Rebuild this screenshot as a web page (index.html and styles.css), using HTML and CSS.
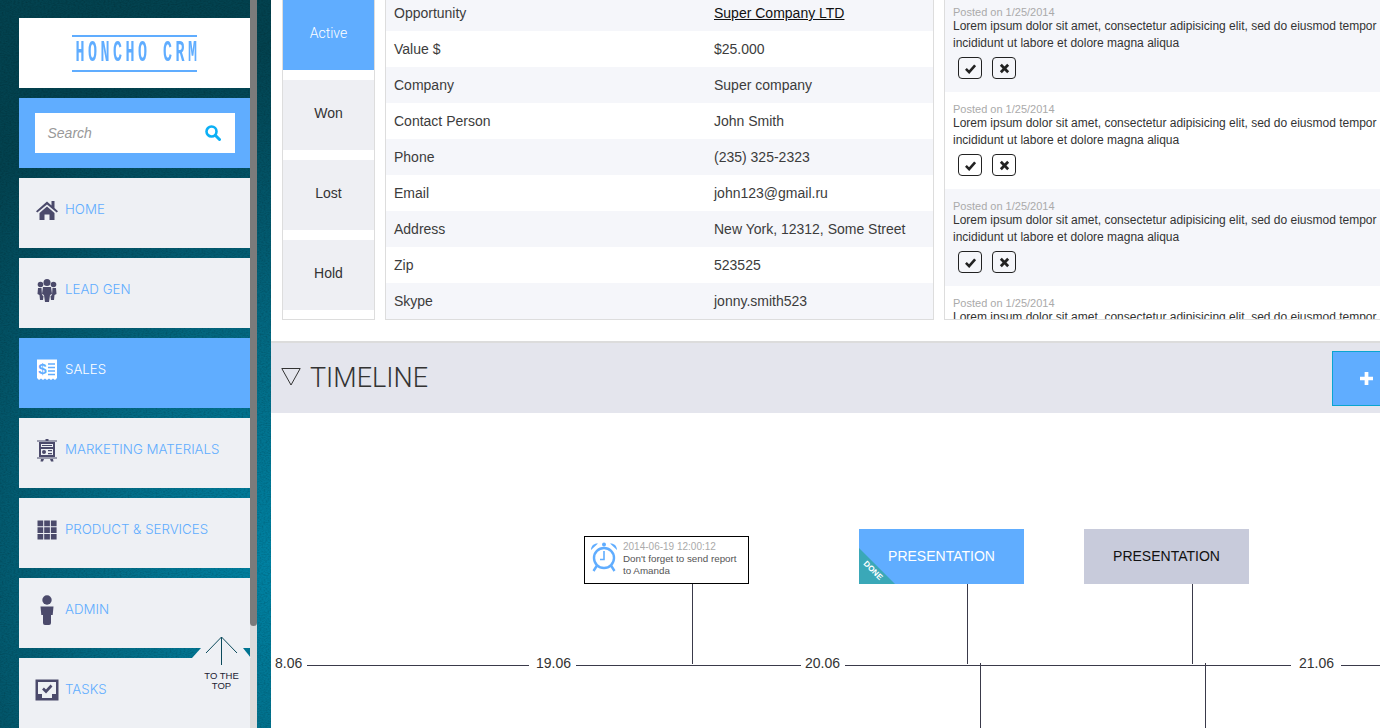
FILE: index.html
```html
<!DOCTYPE html>
<html lang="en">
<head>
<meta charset="utf-8">
<title>Honcho CRM</title>
<link rel="stylesheet" href="styles.css">
</head>
<body>
<div class="app">
  <aside class="side">
    <svg class="grain" width="271" height="728"><filter id="grainf"><feTurbulence type="fractalNoise" baseFrequency="0.5 0.9" numOctaves="2" seed="4"/><feColorMatrix values="0 0 0 0 0  0 0 0 0 0  0 0 0 0 0  0 0 0 1.400 -0.550"/></filter><rect width="271" height="728" filter="url(#grainf)"/></svg>
    <nav class="nav">
      <div class="logo"><div class="logo-frame"><span class="logo-text">HONCHO CRM</span></div></div>
      <div class="search">
        <div class="search-box">
          <span class="search-ph">Search</span>
          <svg class="search-ico" viewBox="0 0 16 16"><circle cx="6.5" cy="6.5" r="5" fill="none" stroke="#0cb0f5" stroke-width="2.6"/><path d="M10.3 10.3 14.5 14.5" stroke="#0cb0f5" stroke-width="3" stroke-linecap="round"/></svg>
        </div>
      </div>
      <a class="item"><svg class="ico" viewBox="0 0 24 24"><path fill="#4b4a6b" d="M1 13.2 12 3.5l4.5 3.9V3h3v7l3.500 3.200-1.300 1.300L12 6.500 2.300 14.500zM4.500 15 12 8.500 19.500 15v7H14.500v-5.500h-5V22H4.500z"/></svg><span>HOME</span></a>
      <a class="item"><svg class="ico" viewBox="0 0 24 24"><g fill="#4b4a6b"><circle cx="12" cy="4.500" r="3.500"/><circle cx="5.500" cy="6.500" r="2.800"/><circle cx="18.500" cy="6.500" r="2.800"/><path d="M8 9h8l1 7-2 1-1 7h-4l-1-7-2-1z"/><path d="M3 10h3.500l.5 7 1.500 1-.5 4H5l-.5-5L2.500 16zM21 10h-3.500l-.5 7-1.500 1 .5 4H19l.5-5 2-1z"/></g></svg><span>LEAD GEN</span></a>
      <a class="item active"><svg class="ico" viewBox="0 0 24 24"><path fill="#fff" d="M2 1.500h20v18.500l-2 2-2-1.500-2 1.500-2-1.500-2 1.500-2-1.500-2 1.500-2-1.500-2 1.500-2-2z"/><text class="ico-dollar" x="3.300" y="16">$</text><path stroke="#60adff" stroke-width="1.400" d="M13 6h7M13 9.500h7M13 13h7M13 16.500h7"/></svg><span>SALES</span></a>
      <a class="item"><svg class="ico" viewBox="0 0 24 24"><g fill="#4b4a6b"><path d="M2 2.500h8.500V1h3v1.500H22v1H2z"/><path d="M4 4h16v15H4zM6 6v3h12V6zM6 11v6h12v-6z"/><path d="M2 19.500h20v1H2zM6 21h3l-1 2.500H5.500zM15 21h3l.5 2.500H16z"/><circle cx="9" cy="14" r="2"/><path d="M13 12h4v1.300h-4zM13 15h4v1.300h-4zM7 7h10v1H7z"/></g></svg><span>MARKETING MATERIALS</span></a>
      <a class="item"><svg class="ico" viewBox="0 0 24 24"><path fill="#4b4a6b" d="M2.500 2.500h5.700v5.700H2.500zM9.200 2.500h5.700v5.700H9.200zM15.900 2.500h5.700v5.700h-5.700zM2.500 9.200h5.700v5.700H2.500zM9.200 9.200h5.700v5.700H9.200zM15.900 9.200h5.700v5.700h-5.700zM2.500 15.900h5.700v5.700H2.500zM9.200 15.900h5.700v5.700H9.200zM15.900 15.900h5.700v5.700h-5.700z"/></svg><span>PRODUCT &amp; SERVICES</span></a>
      <a class="item"><svg class="ico ico-tall" viewBox="0 0 24 30"><g fill="#4b4a6b"><circle cx="12" cy="5" r="4.700"/><path d="M5.500 11.500h13l-.8 8.500h-1.700v8a2 2 0 0 1-2 2h-4a2 2 0 0 1-2-2v-8H6.300z"/></g></svg><span>ADMIN</span></a>
      <a class="item"><svg class="ico" viewBox="0 0 24 24"><path fill="#4b4a6b" fill-rule="evenodd" d="M.5 1.500h23v21H.5zM3 4v12h4v4h10v-4h4V4z"/><path fill="none" stroke="#4b4a6b" stroke-width="2.600" d="M8 10.500l3 3 5.500-6"/></svg><span>TASKS</span></a>
    </nav>
    <div class="scrollbar"><div class="thumb"></div></div>
    <div class="top-link">
      <svg class="top-svg" viewBox="0 0 60 40"><path fill="#eef0f4" d="M1 22 10 12h42l8 10z"/><path fill="none" stroke="#0b4a5c" stroke-width="1" d="M15 17 30.500 1 46 17M30.500 1v28"/></svg>
      <span class="top-text">TO THE<br>TOP</span>
    </div>
  </aside>
  <main class="main">
    <section class="details">
      <div class="stages">
        <div class="stage stage-on">Active</div>
        <div class="stage">Won</div>
        <div class="stage">Lost</div>
        <div class="stage">Hold</div>
      </div>
      <div class="info">
        <div class="row"><span class="k">Opportunity</span><a class="v link">Super Company LTD</a></div>
        <div class="row"><span class="k">Value $</span><span class="v">$25.000</span></div>
        <div class="row"><span class="k">Company</span><span class="v">Super company</span></div>
        <div class="row"><span class="k">Contact Person</span><span class="v">John Smith</span></div>
        <div class="row"><span class="k">Phone</span><span class="v">(235) 325-2323</span></div>
        <div class="row"><span class="k">Email</span><span class="v">john123@gmail.ru</span></div>
        <div class="row"><span class="k">Address</span><span class="v">New York, 12312, Some Street</span></div>
        <div class="row"><span class="k">Zip</span><span class="v">523525</span></div>
        <div class="row"><span class="k">Skype</span><span class="v">jonny.smith523</span></div>
      </div>
      <div class="notes">
        <article class="note">
          <div class="posted">Posted on 1/25/2014</div>
          <p class="body">Lorem ipsum dolor sit amet, consectetur adipisicing elit, sed do eiusmod tempor incididunt ut labore et dolore magna aliqua</p>
          <div class="btns"><button class="btn"><svg viewBox="0 0 12 12"><path fill="none" stroke="#222" stroke-width="2.800" d="M1 6.500 4.500 10 11 2.500"/></svg></button><button class="btn"><svg viewBox="0 0 12 12"><path fill="none" stroke="#222" stroke-width="3" d="M2 2l8 8M10 2l-8 8"/></svg></button></div>
        </article>
        <article class="note">
          <div class="posted">Posted on 1/25/2014</div>
          <p class="body">Lorem ipsum dolor sit amet, consectetur adipisicing elit, sed do eiusmod tempor incididunt ut labore et dolore magna aliqua</p>
          <div class="btns"><button class="btn"><svg viewBox="0 0 12 12"><path fill="none" stroke="#222" stroke-width="2.800" d="M1 6.500 4.500 10 11 2.500"/></svg></button><button class="btn"><svg viewBox="0 0 12 12"><path fill="none" stroke="#222" stroke-width="3" d="M2 2l8 8M10 2l-8 8"/></svg></button></div>
        </article>
        <article class="note">
          <div class="posted">Posted on 1/25/2014</div>
          <p class="body">Lorem ipsum dolor sit amet, consectetur adipisicing elit, sed do eiusmod tempor incididunt ut labore et dolore magna aliqua</p>
          <div class="btns"><button class="btn"><svg viewBox="0 0 12 12"><path fill="none" stroke="#222" stroke-width="2.800" d="M1 6.500 4.500 10 11 2.500"/></svg></button><button class="btn"><svg viewBox="0 0 12 12"><path fill="none" stroke="#222" stroke-width="3" d="M2 2l8 8M10 2l-8 8"/></svg></button></div>
        </article>
        <article class="note">
          <div class="posted">Posted on 1/25/2014</div>
          <p class="body">Lorem ipsum dolor sit amet, consectetur adipisicing elit, sed do eiusmod tempor incididunt ut labore et dolore magna aliqua</p>
        </article>
      </div>
    </section>
    <header class="tl-head">
      <svg class="tl-tri" viewBox="0 0 20 18"><path fill="none" stroke="#333" stroke-width="1" d="M.8.500h18.400L10 17z"/></svg>
      <h2 class="tl-title">TIMELINE</h2>
      <button class="add"><svg viewBox="0 0 14 14"><path stroke="#fff" stroke-width="4" d="M7 0v14M0 7h14"/></svg></button>
    </header>
    <section class="timeline">
      <div class="axis a1"></div><div class="axis a2"></div><div class="axis a3"></div><div class="axis a4"></div>
      <span class="date d1">8.06</span><span class="date d2">19.06</span><span class="date d3">20.06</span><span class="date d4">21.06</span>
      <div class="stem s1"></div><div class="stem s2"></div><div class="stem s3"></div>
      <div class="stem low l1"></div><div class="stem low l2"></div>
      <div class="reminder">
        <svg class="clock" viewBox="0 0 28 30"><g fill="#60adff"><path d="M1 8C1 3 5 1 8 1.500zM27 8c0-5-4-7-7-6.500zM12 2.500a2 2 0 1 0 4 0 2 2 0 0 0-4 0z"/></g><g fill="none" stroke="#60adff"><circle cx="14" cy="16" r="10" stroke-width="2.400"/><path stroke-width="1.600" d="M14 9v8.500h-4"/><path stroke-width="2.400" d="M7 23.500 3.500 29M21 23.500l3.500 5.500"/></g></svg>
        <div class="rem-text"><div class="rem-date">2014-06-19 12:00:12</div><div class="rem-msg">Don't forget to send report to Amanda</div></div>
      </div>
      <div class="event ev-done">PRESENTATION<span class="ribbon"></span><span class="ribbon-text">DONE</span></div>
      <div class="event ev-plain">PRESENTATION</div>
    </section>
  </main>
</div>
</body>
</html>
```
FILE: styles.css
```css
* { box-sizing: border-box; }
html, body { margin: 0; height: 100%; overflow: hidden; background: #fff; }
body { font-family: "Liberation Sans", Arial, sans-serif; color: #333; }
.app { display: flex; width: 1380px; height: 728px; overflow: hidden; }

/* sidebar */
.side {
  position: relative; flex: 0 0 271px; display: flex; height: 728px; padding-left: 19px; overflow: hidden;
  background: radial-gradient(ellipse 420px 520px at 100% 78%, #0082a3 0%, #036c86 40%, #03566a 70%, #03424f 100%);
}
.grain { position: absolute; left: 0; top: 0; opacity: .22; }
.nav { position: relative; flex: 0 0 231px; display: flex; flex-direction: column; gap: 10px; padding-top: 18px; }
.logo { flex: 0 0 70px; background: #fff; display: flex; justify-content: center; align-items: center; }
.logo-frame {
  width: 125px; height: 37px; border-top: 2px solid #60adff; border-bottom: 2px solid #60adff; display: flex; justify-content: center; align-items: center; overflow: visible;
}
.logo-text {
  flex: none; color: #60adff; font-family: "Liberation Mono", monospace; font-weight: 700; font-size: 30px; line-height: 33px; letter-spacing: 7px; margin-right: -7px; white-space: nowrap; transform: scaleX(.5);
}
.search { flex: 0 0 70px; background: #60adff; display: flex; align-items: center; justify-content: center; padding-right: 1px; }
.search-box { width: 200px; height: 40px; margin-left: 1px; background: #fff; display: flex; align-items: center; justify-content: space-between; padding: 0 14px 0 13px; }
.search-ph { font-style: italic; font-size: 14px; color: #999; }
.search-ico { width: 16px; height: 16px; }
.item { flex: 0 0 70px; background: #eef0f4; display: flex; align-items: center; padding: 0 0 8px 16px; color: #60adff; font-family: Inter, sans-serif; font-weight: 300; font-size: 13.300px; }
.item span { margin-left: 6px; }
.item.active { background: #60adff; color: #fff; }
.ico { width: 24px; height: 24px; flex: none; margin-top: 2px; }
.ico-tall { height: 30px; }
.ico-dollar { font: 700 15px "Liberation Sans", sans-serif; fill: #60adff; }
.scrollbar { position: relative; flex: 0 0 7px; height: 728px; background: #dcdcdc; }
.thumb { height: 626px; background: #7b7b7b; border-radius: 0 0 4px 4px; }
.top-link { position: absolute; left: 191px; top: 636px; width: 60px; display: flex; flex-direction: column; align-items: center; }
.top-svg { width: 60px; height: 40px; display: block; margin-bottom: -5px; }
.top-text { font-size: 9.500px; line-height: 10px; color: #223; text-align: center; margin-left: 1px; }

/* main */
.main { flex: 1; min-width: 0; overflow: hidden; display: flex; flex-direction: column; }
.details { flex: 0 0 341px; display: flex; align-items: flex-start; padding-left: 11px; overflow: hidden; }
.stages { flex: 0 0 93px; height: 320px; border: 1px solid #ddd; border-top: 0; display: flex; flex-direction: column; gap: 10px; }
.stage { flex: 0 0 70px; background: #eeeff3; display: flex; align-items: center; justify-content: center; padding-bottom: 4px; font-size: 14px; color: #333; }
.stage-on { background: #60adff; color: #fff; font-family: Roboto, sans-serif; font-weight: 300; }
.info { flex: 0 0 549px; margin-left: 10px; height: 320px; border: 1px solid #ddd; border-top: 0; display: flex; flex-direction: column; justify-content: flex-end; overflow: hidden; }
.row { flex: 0 0 36px; display: flex; align-items: center; padding-left: 8px; font-size: 14px; color: #3c3c3c; }
.row:nth-child(odd) { background: #f5f6fa; }
.k { flex: 0 0 320px; }
.link { color: #111; text-decoration: underline; }
.notes { flex: 1; margin-left: 10px; height: 320px; border-left: 1px solid #ddd; border-bottom: 1px solid #ddd; overflow: hidden; }
.note { height: 97px; padding: 11px 0 0 8px; }
.note:first-child { margin-top: -5px; }
.note:nth-child(odd) { background: #f5f6fa; }
.posted { font-size: 11px; line-height: 12px; color: #aaa; }
.body { margin: 0; font-size: 12px; line-height: 17px; color: #333; width: 430px; }
.btns { display: flex; gap: 10px; margin: 5px 0 0 5px; }
.btn { width: 24px; height: 22px; padding: 0; background: #fff; border: 1px solid #222; border-radius: 4px; display: flex; align-items: center; justify-content: center; }
.btn svg { width: 11px; height: 11px; }
.note:nth-child(odd) .btn { background: transparent; }

/* timeline header */
.tl-head { flex: 0 0 72px; background: #e4e5ed; border-top: 2px solid #dcdcdc; display: flex; align-items: center; padding-left: 10px; }
.tl-tri { width: 20px; height: 18px; margin-top: -2px; }
.tl-title { margin: 0 0 0 9px; flex: 1; font-family: Roboto, sans-serif; font-weight: 300; font-size: 27px; color: #333; }
.add { width: 68px; height: 55px; margin: 1px -20px 0 0; padding: 0 0 0 1px; background: #60adff; border: 1px solid #0aa5d0; display: flex; align-items: center; justify-content: center; }
.add svg { width: 13px; height: 13px; }

/* timeline canvas */
.timeline { position: relative; flex: 1; background: #fff; overflow: hidden; }
.axis { position: absolute; top: 252px; height: 1px; background: #3a3a4a; }
.a1 { left: 36px; width: 222px; }
.a2 { left: 305px; width: 225px; }
.a3 { left: 574px; width: 446px; }
.a4 { left: 1070px; width: 40px; }
.date { position: absolute; top: 242px; font-size: 14px; line-height: 16px; color: #333; }
.d1 { left: 4px; } .d2 { left: 265px; } .d3 { left: 534px; } .d4 { left: 1028px; }
.stem { position: absolute; top: 171px; width: 1px; height: 80px; background: #3a3a4a; }
.s1 { left: 421px; } .s2 { left: 696px; } .s3 { left: 921px; }
.low { top: 250px; height: 70px; }
.l1 { left: 709px; } .l2 { left: 934px; }
.reminder { position: absolute; left: 313px; top: 123px; width: 165px; height: 48px; border: 1px solid #000; background: #fff; display: flex; padding: 5px 0 0 5px; }
.clock { width: 28px; height: 30px; flex: none; }
.rem-text { margin: -1px 0 0 5px; width: 120px; font-size: 9.800px; line-height: 12px; color: #555; }
.rem-date { color: #aaa; font-size: 10px; }
.event { position: absolute; top: 116px; width: 165px; height: 55px; display: flex; align-items: center; justify-content: center; padding-bottom: 2px; font-size: 14px; overflow: hidden; }
.ev-done { left: 588px; background: #60adff; color: #fff; }
.ev-plain { left: 813px; background: #c8cbdb; color: #111; }
.ribbon { position: absolute; left: 0; bottom: 0; width: 36px; height: 36px; background: #3aa8b8; clip-path: polygon(0 0, 100% 100%, 0 100%); }
.ribbon-text { position: absolute; left: 1px; bottom: 9px; width: 26px; text-align: center; font: 700 8px/9px "Liberation Sans", sans-serif; color: #fff; transform: rotate(45deg); }
```
